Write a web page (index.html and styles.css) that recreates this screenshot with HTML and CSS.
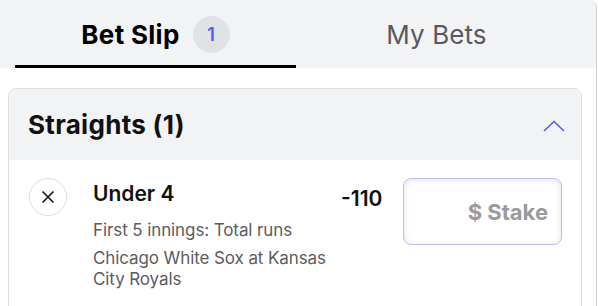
FILE: index.html
```html
<!DOCTYPE html>
<html>
<head>
<meta charset="utf-8">
<link rel="stylesheet" href="styles.css">
</head>
<body>
<div class="panel">
  <div class="tabs">
    <div class="tab active">
      <span class="tab-label">Bet Slip</span>
      <span class="badge">1</span>
    </div>
    <div class="tab">
      <span class="tab-label">My Bets</span>
    </div>
  </div>
  <div class="card">
    <div class="card-head">
      <span class="card-title">Straights (1)</span>
      <svg class="chev" width="22" height="12" viewBox="0 0 22 12"><path d="M1 11 L11 1.5 L21 11" fill="none" stroke="#4f5df0" stroke-width="1.6"/></svg>
    </div>
    <div class="bet">
      <button class="remove" aria-label="remove">
        <svg width="14" height="14" viewBox="0 0 14 14"><path d="M1.5 1.5 L12.5 12.5 M12.5 1.5 L1.5 12.5" stroke="#111" stroke-width="1.6" fill="none"/></svg>
      </button>
      <div class="info">
        <div class="sel">Under 4</div>
        <div class="market">First 5 innings: Total runs</div>
        <div class="event">Chicago White Sox at Kansas City Royals</div>
      </div>
      <div class="odds">-110</div>
      <div class="stake">$ Stake</div>
    </div>
  </div>
</div>
</body>
</html>
```

FILE: styles.css
```css
html, body {
  margin: 0;
  padding: 0;
  background: #ffffff;
}
body {
  font-family: Inter, "Noto Sans", sans-serif;
  color: #111;
}
.panel {
  width: 596px;
  height: 306px;
  border-right: 1px solid #cfcfd2;
  border-top-right-radius: 8px;
  overflow: hidden;
}
.tabs {
  display: flex;
  background: #f2f3f5;
  height: 68px;
  padding: 0 19px 0 15px;
}
.tab {
  flex: 1;
  display: flex;
  align-items: center;
  justify-content: center;
  gap: 13px;
  border-bottom: 3px solid transparent;
  box-sizing: border-box;
  padding-top: 3px;
}
.tab.active {
  border-bottom-color: #000;
}
.tab-label {
  font-size: 26px;
  letter-spacing: 0.1px;
  color: #5a5a5e;
}
.tab.active .tab-label {
  font-weight: 700;
  color: #000;
  letter-spacing: 0.3px;
}
.badge {
  width: 37px;
  height: 37px;
  border-radius: 50%;
  background: #e1e2e6;
  color: #4f5df0;
  font-size: 18px;
  font-weight: 600;
  display: flex;
  align-items: center;
  justify-content: center;
}
.card {
  margin: 20px 14px 0 8px;
  border: 1px solid #dcdde0;
  border-radius: 8px;
  overflow: hidden;
  height: 240px;
}
.card-head {
  background: #f2f3f5;
  height: 71px;
  display: flex;
  align-items: center;
  justify-content: space-between;
  padding: 0 16px 0 19px;
}
.card-title {
  font-size: 26px;
  font-weight: 700;
  letter-spacing: 0.3px;
}
.chev {
  margin-top: 2px;
}
.bet {
  display: flex;
  align-items: flex-start;
  padding: 18px 19px 0 20px;
}
.remove {
  width: 38px;
  height: 38px;
  border-radius: 50%;
  border: 1px solid #dedee0;
  background: #fff;
  display: flex;
  align-items: center;
  justify-content: center;
  padding: 0;
  flex: none;
}
.info {
  width: 240px;
  margin-left: 26px;
  margin-top: 2px;
}
.sel {
  font-size: 21px;
  font-weight: 600;
  letter-spacing: 0;
  line-height: 28px;
}
.market {
  margin-top: 12px;
  font-size: 17px;
  color: #5c5c60;
  line-height: 21px;
  letter-spacing: -0.1px;
}
.event {
  margin-top: 7px;
  font-size: 17px;
  color: #5c5c60;
  line-height: 21px;
  letter-spacing: -0.1px;
}
.odds {
  margin-left: 8px;
  margin-top: 8px;
  font-size: 21px;
  font-weight: 600;
  letter-spacing: 0;
  width: 54px;
}
.stake {
  margin-left: 8px;
  width: 159px;
  height: 67px;
  box-sizing: border-box;
  border: 1px solid #b9bff5;
  border-radius: 8px;
  box-shadow: inset 0 1px 6px rgba(0,0,0,0.12);
  display: flex;
  align-items: center;
  justify-content: flex-end;
  padding-right: 13px;
  font-size: 22px;
  font-weight: 700;
  color: #9a9a9e;
  letter-spacing: 0;
}
```
